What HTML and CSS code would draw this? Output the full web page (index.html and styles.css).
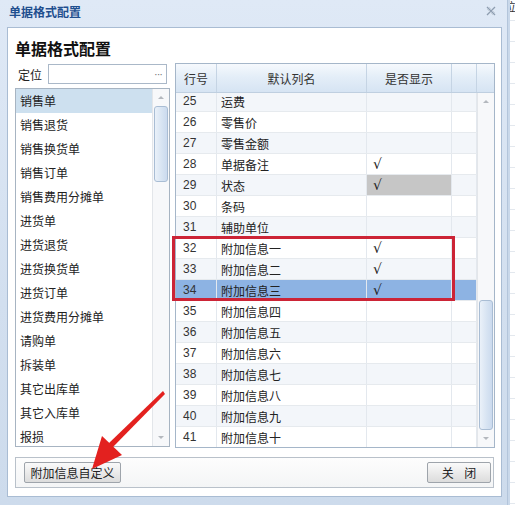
FILE: index.html
```html
<!doctype html>
<html lang="zh-CN">
<head>
    <meta charset="UTF-8">
    <title>单据格式配置</title>
    <link rel="stylesheet" href="styles.css">
</head>
<body>
<div class="desk">
    <div class="win">
        <div class="win-title">
            <span>单据格式配置</span>
            <svg class="win-close" width="10" height="10" viewBox="0 0 10 10">
                <path d="M1 1 L9 9 M9 1 L1 9" stroke="#8e9db0" stroke-width="1.3" fill="none"/>
                <path d="M1 3 L7 9 M3 1 L9 7" stroke="#c3ccd8" stroke-width="0.8" fill="none"/>
            </svg>
        </div>
        <div class="panel">
            <h1 class="heading">单据格式配置</h1>
            <div class="content">
                <div class="side">
                    <div class="locate">
                        <span class="locate-label">定位</span>
                        <div class="locate-box"><span class="dots">···</span></div>
                    </div>
                    <div class="bill-list">
                        <ul class="items">
                            <li class="selected">销售单</li>
                            <li>销售退货</li>
                            <li>销售换货单</li>
                            <li>销售订单</li>
                            <li>销售费用分摊单</li>
                            <li>进货单</li>
                            <li>进货退货</li>
                            <li>进货换货单</li>
                            <li>进货订单</li>
                            <li>进货费用分摊单</li>
                            <li>请购单</li>
                            <li>拆装单</li>
                            <li>其它出库单</li>
                            <li>其它入库单</li>
                            <li>报损</li>
                        </ul>
                        <div class="vscroll list-scroll">
                            <div class="arrow up"></div>
                            <div class="track"><div class="thumb"></div></div>
                            <div class="arrow down"></div>
                        </div>
                    </div>
                </div>

                <div class="grid">
                    <div class="ghead">
                        <div>行号</div>
                        <div>默认列名</div>
                        <div>是否显示</div>
                        <div></div>
                        <div></div>
                    </div>
                    <div class="gbody">
                        <div class="rows">
                            <div class="rows-inner">
                                <div class="row odd"><span>25</span><span>运费</span><span></span><span></span></div>
                                <div class="row"><span>26</span><span>零售价</span><span></span><span></span></div>
                                <div class="row odd"><span>27</span><span>零售金额</span><span></span><span></span></div>
                                <div class="row"><span>28</span><span>单据备注</span><span>√</span><span></span></div>
                                <div class="row odd"><span>29</span><span>状态</span><span class="editing">√</span><span></span></div>
                                <div class="row"><span>30</span><span>条码</span><span></span><span></span></div>
                                <div class="row odd"><span>31</span><span>辅助单位</span><span></span><span></span></div>
                                <div class="row"><span>32</span><span>附加信息一</span><span>√</span><span></span></div>
                                <div class="row odd"><span>33</span><span>附加信息二</span><span>√</span><span></span></div>
                                <div class="row current"><span>34</span><span>附加信息三</span><span>√</span><span></span></div>
                                <div class="row"><span>35</span><span>附加信息四</span><span></span><span></span></div>
                                <div class="row odd"><span>36</span><span>附加信息五</span><span></span><span></span></div>
                                <div class="row"><span>37</span><span>附加信息六</span><span></span><span></span></div>
                                <div class="row odd"><span>38</span><span>附加信息七</span><span></span><span></span></div>
                                <div class="row"><span>39</span><span>附加信息八</span><span></span><span></span></div>
                                <div class="row odd"><span>40</span><span>附加信息九</span><span></span><span></span></div>
                                <div class="row"><span>41</span><span>附加信息十</span><span></span><span></span></div>
                            </div>
                        </div>
                        <div class="vscroll grid-scroll">
                            <div class="arrow up"></div>
                            <div class="track"><div class="thumb"></div></div>
                            <div class="arrow down"></div>
                        </div>
                    </div>
                </div>
            </div>

            <div class="footbar">
                <button class="btn">附加信息自定义</button>
                <button class="btn btn-close">关 闭</button>
            </div>
        </div>
    </div>
    <div class="behind"><span class="behind-glyph">位</span></div>

    <!-- annotation overlays -->
    <div class="mark-box"></div>
    <svg class="mark-arrow" width="515" height="505" viewBox="0 0 515 505">
        <polygon points="163,391 165,394 112,448 108,444" fill="#e3211f"/>
        <polygon points="92,469 102,436 122,455" fill="#e3211f"/>
    </svg>
</div>
</body>
</html>
```

FILE: styles.css
```css
body {
    margin: 0;
    width: 515px;
    height: 505px;
    overflow: hidden;
    font: 12px "Liberation Sans", "Noto Sans CJK SC", sans-serif;
    color: #222;
    background: #fff;
}

.desk {
    position: relative;
    display: flex;
    height: 505px;
}

.win {
    width: 508px;
    box-sizing: border-box;
    padding: 0 5px 0 7px;
    background: linear-gradient(#dfe9f6, #d2dfef 60%, #cddbec);
    border-right: 1px solid #b3c5db;
}

.win-title {
    height: 27px;
    box-sizing: border-box;
    padding: 0 6px 5px 2px;
    display: flex;
    align-items: center;
    justify-content: space-between;
    color: #1f4f8f;
    font-weight: bold;
    font-family: "Noto Sans CJK SC", sans-serif;
}

.panel {
    height: 470px;
    box-sizing: border-box;
    border: 1px solid #a9bcd3;
    background: #fff;
    padding: 10px 7px 0;
}

.heading {
    margin: 0 0 5px;
    height: 20px;
    font: bold 16px/20px "Noto Sans CJK SC", sans-serif;
    color: #111;
}

.content {
    display: grid;
    grid-template-columns: 155px 320px;
    column-gap: 5px;
    height: 384px;
}

.side {
    display: flex;
    flex-direction: column;
}

.locate {
    display: flex;
    align-items: center;
    margin-top: 1px;
    height: 20px;
}

.locate-label {
    width: 33px;
    padding-left: 3px;
    box-sizing: border-box;
    font-family: "Noto Sans CJK SC", sans-serif;
}

.locate-box {
    width: 119px;
    height: 20px;
    box-sizing: border-box;
    border: 1px solid #aab8c8;
    display: flex;
    justify-content: flex-end;
    align-items: center;
}

.dots {
    color: #777;
    padding-right: 4px;
    font-size: 11px;
    letter-spacing: -1px;
}

.bill-list {
    margin-top: 4px;
    height: 359px;
    box-sizing: border-box;
    border: 1px solid #a7b4c2;
    display: flex;
    overflow: hidden;
}

.items {
    list-style: none;
    margin: 0;
    padding: 0;
    flex: 1;
    overflow: hidden;
    font-family: "Noto Sans CJK SC", sans-serif;
}

.items li {
    height: 24px;
    line-height: 24px;
    padding-left: 4px;
}

.items li.selected {
    background: #cde0ef;
}

/* scrollbars */
.vscroll {
    width: 17px;
    box-sizing: border-box;
    border-left: 1px solid #e3e6ea;
    background: #f7f8fa;
    display: flex;
    flex-direction: column;
}

.vscroll .arrow {
    height: 17px;
    display: flex;
    align-items: center;
    justify-content: center;
}

.vscroll .arrow::after {
    content: "";
    border-left: 3px solid transparent;
    border-right: 3px solid transparent;
}

.vscroll .up::after {
    border-bottom: 3px solid #b4b8be;
}

.vscroll .down::after {
    border-top: 3px solid #b4b8be;
}

.vscroll .track {
    flex: 1;
    display: flex;
    flex-direction: column;
}

.vscroll .thumb {
    margin: 0 1px 0 1px;
    box-sizing: border-box;
    border: 1px solid #a9bdd4;
    border-radius: 3px;
    background: linear-gradient(90deg, #eaf1f9, #d6e3f2 60%, #cbdaee);
}

.list-scroll .thumb {
    height: 76px;
}

.grid-scroll .track {
    justify-content: flex-end;
}

.grid-scroll .thumb {
    height: 130px;
}

/* grid */
.grid {
    border: 1px solid #a5b6c9;
    display: flex;
    flex-direction: column;
}

.ghead {
    height: 28px;
    display: grid;
    grid-template-columns: 41px 150px 85px 25px 17px;
    border-bottom: 1px solid #bfcfe0;
    background: linear-gradient(#f6f9fd, #e4eef8 45%, #d6e4f3);
    font-family: "Noto Sans CJK SC", sans-serif;
    color: #333;
}

.ghead div {
    display: flex;
    align-items: center;
    justify-content: center;
    border-right: 1px solid #c5d4e4;
}

.ghead div:last-child {
    border-right: 0;
}

.gbody {
    flex: 1;
    display: flex;
    overflow: hidden;
}

.rows {
    flex: 1;
    overflow: hidden;
}

.rows-inner {
    margin-top: -3px;
}

.row {
    height: 21px;
    box-sizing: border-box;
    border-top: 1px solid #e6eaee;
    display: grid;
    grid-template-columns: 41px 150px 85px 25px;
}

.row span {
    display: flex;
    align-items: center;
    border-right: 1px solid #e3e8ee;
    font-family: "Noto Sans CJK SC", sans-serif;
}

.row span:first-child {
    padding-left: 7px;
    font-family: "Liberation Sans", sans-serif;
    color: #333;
}

.row span:nth-child(2) {
    padding-left: 4px;
}

.row span:nth-child(3) {
    padding-left: 6px;
    font-family: "DejaVu Sans", sans-serif;
    font-size: 14px;
}

.row.odd {
    background: #f3f6fa;
}

.row .editing {
    background: #c6c6c6;
}

.row.current {
    background: #8db3e3;
}

/* footer */
.footbar {
    margin-top: 10px;
    height: 31px;
    box-sizing: border-box;
    border: 1px solid #b9c1ca;
    display: flex;
    align-items: center;
    justify-content: space-between;
    padding: 0 2px 0 8px;
    background: linear-gradient(#fdfdfd, #f4f5f6);
}

.btn {
    height: 21px;
    padding: 0;
    border: 1px solid #9ea4ab;
    border-radius: 2px;
    background: linear-gradient(#fafafa, #ebebeb 50%, #dcdcdc);
    font: 12px "Noto Sans CJK SC", sans-serif;
    color: #222;
    width: 97px;
}

.btn-close {
    width: 64px;
    letter-spacing: 4px;
    text-indent: 4px;
}

/* window behind on the right */
.behind {
    width: 7px;
    overflow: hidden;
    background:
        repeating-linear-gradient(#fff 0 20px, #e3e8ee 20px 21px);
    border-left: 2px solid #c9d8ea;
}

.behind-glyph {
    display: block;
    margin-left: -6px;
    font: 12px "Noto Sans CJK SC", sans-serif;
    line-height: 14px;
    color: #333;
}

/* red annotations */
.mark-box {
    position: absolute;
    left: 172px;
    top: 236px;
    width: 283px;
    height: 65px;
    box-sizing: border-box;
    border: 3px solid #cc2436;
}

.mark-arrow {
    position: absolute;
    left: 0;
    top: 0;
    pointer-events: none;
}
```
